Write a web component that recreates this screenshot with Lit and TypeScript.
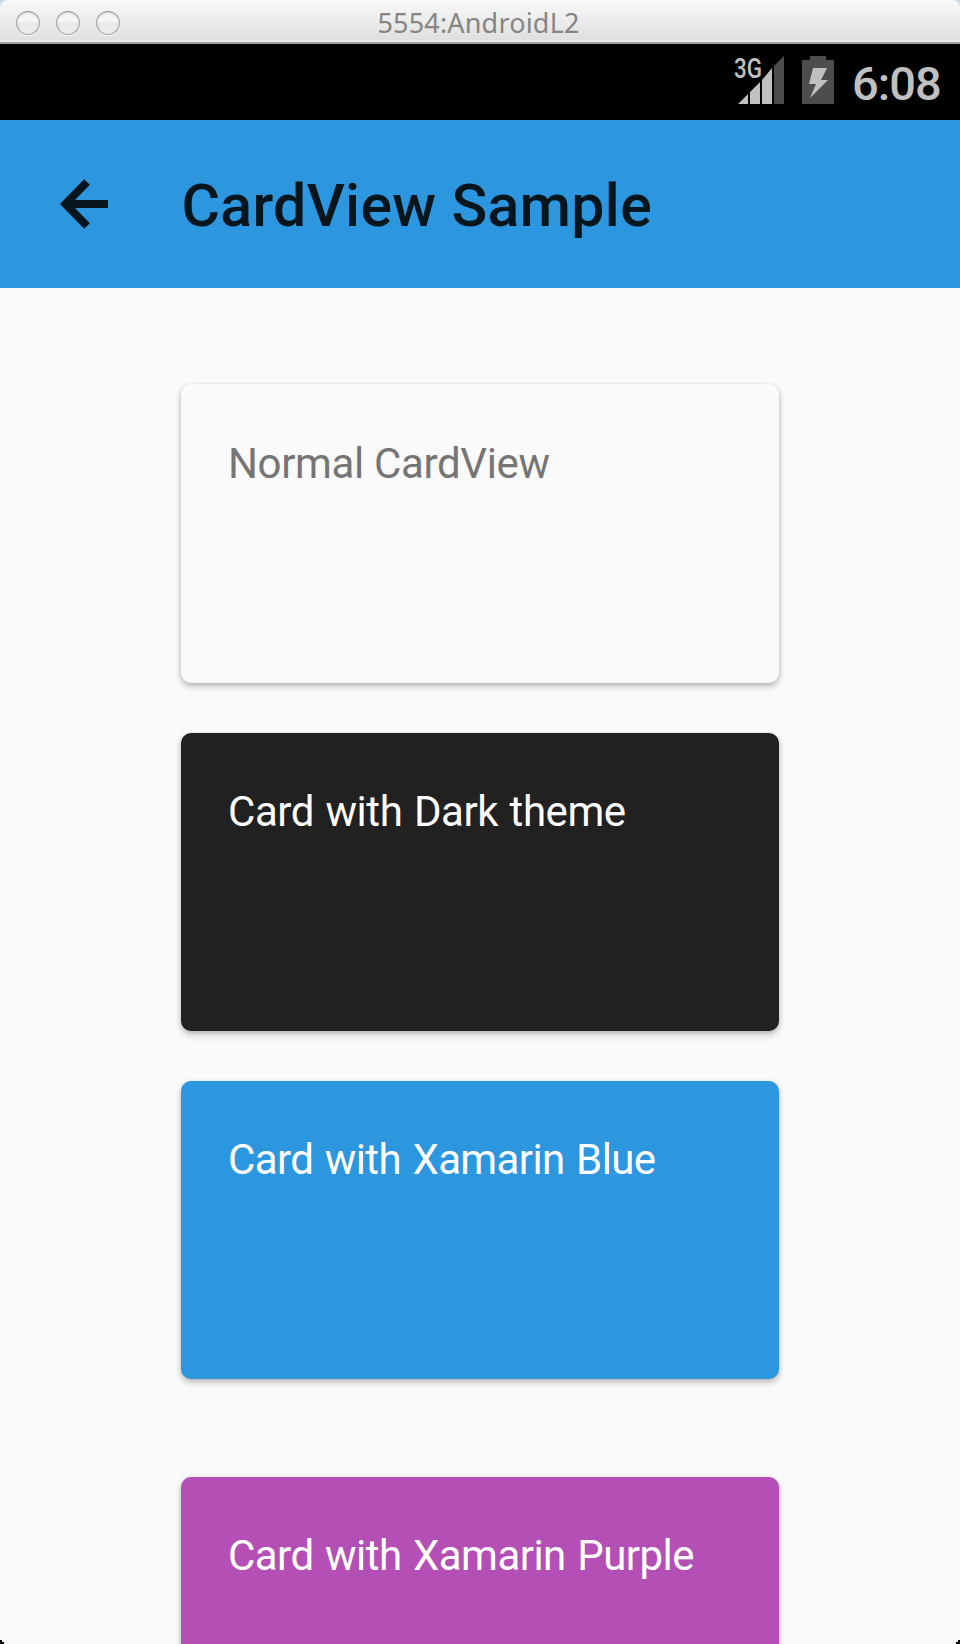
import { LitElement, html, css } from "lit";
import { customElement, property } from "lit/decorators.js";

@customElement("demo-card")
class DemoCard extends LitElement {
  @property({ reflect: true }) variant = "normal";
  @property() label = "";
  static styles = css`
    :host {
      display: block;
      box-sizing: border-box;
      width: 598px;
      height: 298px;
      padding: 54px 47px;
      border-radius: 10px;
      font: 400 42px/49px Roboto, sans-serif;
      letter-spacing: -0.6px;
      word-spacing: 1.6px;
      color: #fff;
      white-space: nowrap;
      background: #fafafa;
      box-shadow: 0 4px 7px rgba(0, 0, 0, 0.2), 0 1px 4px rgba(0, 0, 0, 0.14);
    }
    :host([variant="normal"]) {
      height: 299px;
      padding-top: 55px;
      letter-spacing: -0.35px;
      word-spacing: 0;
      color: #757575;
    }
    :host([variant="dark"]) { background: #212121; letter-spacing: -0.45px; }
    :host([variant="blue"]) { background: #2c96df; }
    :host([variant="purple"]) { background: #b44fb6; letter-spacing: -0.54px; }
    .text { display: block; }
  `;
  render() {
    return html`<span class="text">${this.label}</span>`;
  }
}

@customElement("app-root")
class AppRoot extends LitElement {
  static styles = css`
    :host {
      display: flex;
      flex-direction: column;
      width: 960px;
      height: 1644px;
      overflow: hidden;
      position: relative;
      background: #fafafa;
      font-family: Roboto, sans-serif;
    }
    .frame { background: #cfd9e2; flex: none; }
    .titlebar {
      box-sizing: border-box;
      height: 44px;
      display: grid;
      grid-template-columns: 1fr auto 1fr;
      align-items: center;
      border-bottom: 2px solid #a0a0a0;
      background: linear-gradient(#f9f9f9, #e0e0e0 94%, #e9e9e9 96%);
      border-radius: 8px 8px 0 0;
    }
    .lights { display: flex; gap: 16px; padding-left: 16px; padding-top: 2px; }
    .light {
      box-sizing: border-box;
      width: 24px;
      height: 24px;
      border-radius: 50%;
      border: 1.5px solid #a9a9a9;
      border-top-color: #929292;
      background: linear-gradient(#ececec, #fafafa 35%, #e8e8e8 55%, #f4f4f4);
      box-shadow: 0 1px 1px #f8f8f8, inset 0 0 2px #b0b0b0;
    }
    .caption {
      font: 400 27px/40px "Noto Sans", sans-serif;
      letter-spacing: 0.18px;
      padding: 3px 3px 0 0;
      color: #858585;
      white-space: nowrap;
    }
    .status {
      height: 76px;
      flex: none;
      display: flex;
      justify-content: flex-end;
      background: #000;
    }
    .signal { width: 52px; height: 76px; }
    .net { font: 500 28px Roboto, sans-serif; }
    .battery { width: 32px; height: 76px; margin-left: 16px; }
    .clock {
      box-sizing: border-box;
      width: 126px;
      padding: 2px 0 0 18px;
      font: 500 47px/76px Roboto, sans-serif;
      letter-spacing: -0.9px;
      color: #c0c0c0;
    }
    .appbar {
      height: 168px;
      flex: none;
      display: flex;
      align-items: center;
      background: #2c96df;
    }
    .back { width: 48px; height: 50px; margin-left: 60px; }
    .heading {
      margin: 0 0 0 73.5px;
      padding-top: 3px;
      font: 500 59px/70px Roboto, sans-serif;
      letter-spacing: 0.32px;
      color: #07151d;
      white-space: nowrap;
    }
    .cards { display: flex; flex-direction: column; padding: 96px 0 0 181px; gap: 50px; }
    .last { margin-top: 48px; }
    .corner { position: absolute; bottom: 0; width: 4px; height: 4px; }
    .left { left: 0; }
    .right { right: 0; transform: scaleX(-1); }
  `;
  corner(side: string) {
    return html`<svg class="corner ${side}" viewBox="0 0 4 4"><path d="M0 0H2V2H4V4H0Z" /></svg>`;
  }
  render() {
    return html`
      <div class="frame">
        <div class="titlebar">
          <div class="lights">
            <span class="light"></span><span class="light"></span><span class="light"></span>
          </div>
          <span class="caption">5554:AndroidL2</span>
        </div>
      </div>
      <div class="status">
        <svg class="signal" viewBox="0 0 52 76">
          <path fill="#c0c0c0" d="M4 60L14 50V60ZM16 60V48L26 38V60ZM28 60V36L38 24V60Z" />
          <path fill="#4d4d4d" d="M40 60V22L50 12V60Z" />
          <text class="net" x="0" y="34" textLength="28" lengthAdjust="spacingAndGlyphs" fill="#c0c0c0">3G</text>
        </svg>
        <svg class="battery" viewBox="0 0 32 76">
          <path fill="#4d4d4d" d="M8 12H24V16H32V60H0V16H8Z" />
          <path fill="#c0c0c0" d="M11 24H25L19 36H26L8 54L14 40H7Z" />
        </svg>
        <span class="clock">6:08</span>
      </div>
      <div class="appbar">
        <svg class="back" viewBox="0 0 48 50">
          <path fill="none" stroke="#07151d" stroke-width="8" d="M27 3L5.500 25L27 47M6 25H48" />
        </svg>
        <h1 class="heading">CardView Sample</h1>
      </div>
      <div class="cards">
        <demo-card variant="normal" label="Normal CardView"></demo-card>
        <demo-card variant="dark" label="Card with Dark theme"></demo-card>
        <demo-card variant="blue" label="Card with Xamarin Blue"></demo-card>
        <demo-card class="last" variant="purple" label="Card with Xamarin Purple"></demo-card>
      </div>
      ${this.corner("left")}${this.corner("right")}
    `;
  }
}
